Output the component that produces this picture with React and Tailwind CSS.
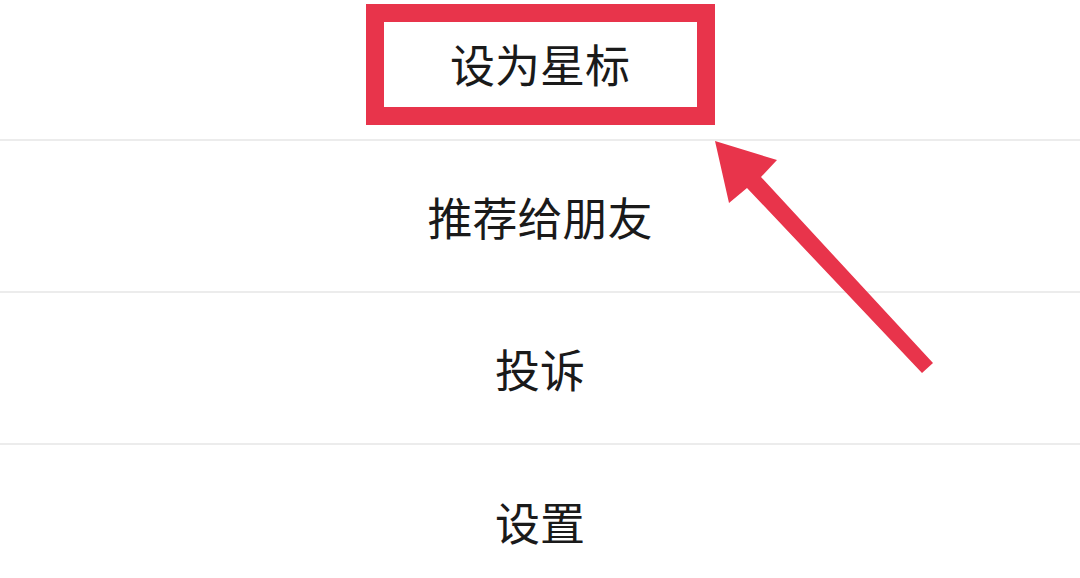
const items = ['推荐给朋友', '投诉', '设置'];

const font = { fontFamily: '"Noto Sans CJK SC", "Noto Sans", sans-serif' };

export default function App() {
  return (
    <div className="relative w-[1080px] h-[578px] overflow-hidden bg-white" style={font}>
      <div className="-mt-[11px] flex flex-col">
        {/* starred row, boxed in red */}
        <div className="h-[152px] flex items-center justify-center border-b-2 border-[#ececec]">
          <div className="w-[349px] h-[121px] mt-[1px] border-[18px] border-[#e8344b] flex items-center justify-center">
            <span className="text-[45px] leading-none text-[#1a1a1a] -mt-[3px]">设为星标</span>
          </div>
        </div>
        {items.map((label, idx) => (
          <div
            key={idx}
            className={`h-[152px] flex items-center justify-center ${idx < items.length - 1 ? 'border-b-2 border-[#ececec]' : ''}`}
          >
            <span className="text-[45px] leading-none text-[#1a1a1a]">{label}</span>
          </div>
        ))}
      </div>

      {/* annotation arrow */}
      <svg className="absolute inset-0 pointer-events-none" width="1080" height="578" viewBox="0 0 1080 578">
        <polygon
          points="715,141 777,160 761,177 933,363 922,373 747,188 729,203"
          fill="#e8344b"
        />
      </svg>
    </div>
  );
}
